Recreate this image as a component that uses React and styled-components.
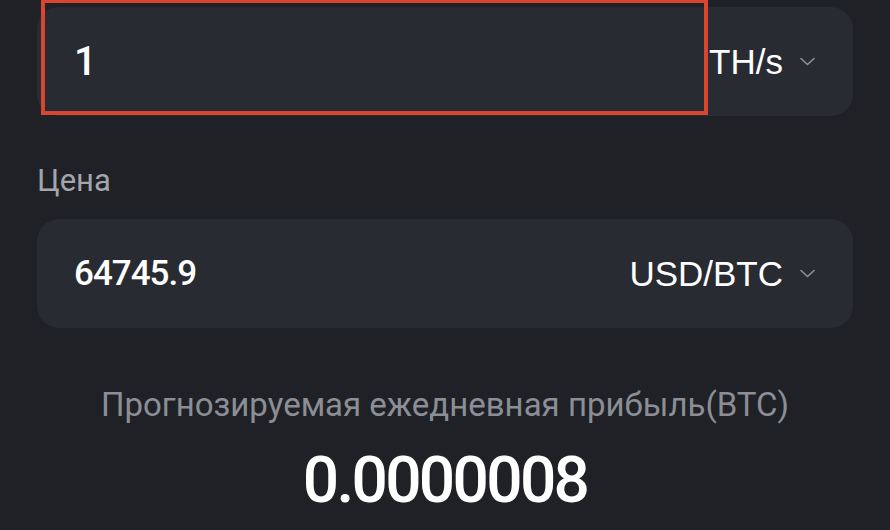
import React from 'react'
import styled, { createGlobalStyle } from 'styled-components'

const GlobalStyle = createGlobalStyle`
  html, body {
    margin: 0;
    padding: 0;
    background: #1f2126;
  }
  body {
    font-family: Roboto, 'Liberation Sans', sans-serif;
    color: #fff;
  }
`

const Page = styled.main`
  width: 890px;
  height: 530px;
  overflow: hidden;
  box-sizing: border-box;
  padding: 7px 37px 0;
  display: flex;
  flex-direction: column;
`

const Field = styled.div`
  position: relative;
  height: 109px;
  flex-shrink: 0;
  border-radius: 22px;
  background: #292b33;
  display: flex;
  align-items: center;
  padding: 0 38px 0 37px;
`

const Value = styled.span`
  flex: 1;
  font-family: Roboto, sans-serif;
  font-weight: 500;
  font-size: ${p => p.$size || 35}px;
  letter-spacing: ${p => p.$tight ? '-1px' : '0'};
  color: #fff;
`

const Unit = styled.button`
  display: flex;
  align-items: center;
  gap: 17px;
  border: 0;
  padding: 0;
  background: none;
  color: #fff;
  font-family: 'Liberation Sans', Arial, sans-serif;
  font-size: 35px;
  cursor: pointer;
`

// annotation frame drawn on top of the hashrate input
const Highlight = styled.div`
  position: absolute;
  left: 4px;
  top: -8px;
  width: 667px;
  height: 116px;
  box-sizing: border-box;
  border: 4px solid #d8462f;
  pointer-events: none;
`

const Label = styled.div`
  font-family: Roboto, sans-serif;
  font-size: 31px;
  line-height: 36px;
  color: #a3a6ad;
  margin: 47px 0 0 0;
  height: 56px;
  flex-shrink: 0;
`

const Result = styled.section`
  display: flex;
  flex-direction: column;
  align-items: center;
  margin-top: 58px;
`

const ResultTitle = styled.div`
  font-family: Roboto, sans-serif;
  font-size: 33px;
  line-height: 38px;
  color: #8b8e95;
`

const ResultValue = styled.div`
  font-family: Roboto, sans-serif;
  font-weight: 500;
  font-size: 64px;
  line-height: 74px;
  letter-spacing: -2.7px;
  margin-top: 20px;
  color: #fff;
`

const Chevron = () => (
  <svg width="15" height="9" viewBox="0 0 15 9" fill="none">
    <polyline points="1,1.5 7.5,7.5 14,1.5" stroke="#8e9199" strokeWidth="1.6" strokeLinecap="round" strokeLinejoin="round" />
  </svg>
)

const App = () => (
  <>
    <GlobalStyle />
    <Page>
      <Field>
        <Highlight />
        <Value $size={40}>1</Value>
        <Unit>TH/s<Chevron /></Unit>
      </Field>
      <Label>Цена</Label>
      <Field>
        <Value $tight>64745.9</Value>
        <Unit>USD/BTC<Chevron /></Unit>
      </Field>
      <Result>
        <ResultTitle>Прогнозируемая ежедневная прибыль(BTC)</ResultTitle>
        <ResultValue>0.0000008</ResultValue>
      </Result>
    </Page>
  </>
)

export default App
